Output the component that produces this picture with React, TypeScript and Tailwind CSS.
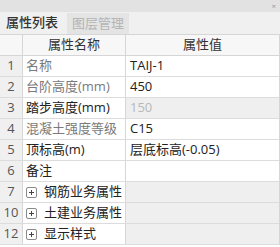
import React from "react";

type Row = {
  n: string;
  name: string;
  value?: string;
  nameDim?: boolean;
  valueDim?: boolean;
  group?: boolean;
};

const rows: Row[] = [
  { n: "1", name: "名称", value: "TAIJ-1", nameDim: true },
  { n: "2", name: "台阶高度(mm)", value: "450", nameDim: true },
  { n: "3", name: "踏步高度(mm)", value: "150", valueDim: true },
  { n: "4", name: "混凝土强度等级", value: "C15", nameDim: true },
  { n: "5", name: "顶标高(m)", value: "层底标高(-0.05)" },
  { n: "6", name: "备注", value: "" },
  { n: "7", name: "钢筋业务属性", group: true },
  { n: "10", name: "土建业务属性", group: true },
  { n: "12", name: "显示样式", group: true },
];

function Plus() {
  return (
    <span className="inline-flex w-[11px] h-[11px] border border-[#8a8a8a] rounded-[2px] items-center justify-center mr-[7px] bg-white">
      <svg width="7" height="7" viewBox="0 0 7 7">
        <path d="M3.5 1V6M1 3.5H6" stroke="#444" strokeWidth="1" />
      </svg>
    </span>
  );
}

export default function App() {
  return (
    <div
      className="w-[280px] h-[247px] overflow-hidden bg-white text-[13px] text-[#222]"
      style={{ fontFamily: '"Open Sans", "Noto Sans CJK SC", sans-serif' }}
    >
      <div className="h-[12px] bg-[#e2e2e2] flex justify-end items-center pr-[4px]">
        <span className="text-[8px] leading-none text-[#999]">×</span>
      </div>
      <div className="h-[23px] bg-[#f0f0f0] flex items-end gap-[3px] border-b border-[#d6d6d6]">
        <div className="w-[64px] h-[23px] flex items-center justify-center text-[#333] font-medium">
          属性列表
        </div>
        <div className="w-[62px] h-[21px] bg-[#e4e4e4] flex items-center justify-center text-[#b4b4b4]">
          图层管理
        </div>
      </div>
      <div className="border-r border-[#d6d6d6] w-[280px]">
        <div className="flex h-[21px] border-b border-[#d6d6d6] bg-[#f7f7f7]">
          <div className="w-[23px] border-r border-[#d6d6d6]" />
          <div className="w-[103px] border-r border-[#d6d6d6] flex items-center justify-center text-[#333]">
            属性名称
          </div>
          <div className="flex-1 flex items-center justify-center text-[#333]">属性值</div>
        </div>
        {rows.map((r) => (
          <div key={r.n} className="flex h-[21px] border-b border-[#dcdcdc]">
            <div className="w-[23px] border-r border-[#d6d6d6] bg-[#f0f0f0] flex items-center justify-center text-[#555]">
              {r.n}
            </div>
            <div
              className={`w-[103px] border-r border-[#d6d6d6] flex items-center pl-[3px] whitespace-nowrap ${
                r.nameDim ? "text-[#7a7a7a]" : "text-[#222]"
              }`}
            >
              {r.group && <Plus />}
              {r.name}
            </div>
            <div
              className={`flex-1 flex items-center pl-[4px] whitespace-nowrap ${
                r.group || r.valueDim ? "bg-[#efefef]" : "bg-white"
              } ${r.valueDim ? "text-[#b8b8b8]" : "text-[#222]"}`}
            >
              {r.value}
            </div>
          </div>
        ))}
      </div>
    </div>
  );
}
